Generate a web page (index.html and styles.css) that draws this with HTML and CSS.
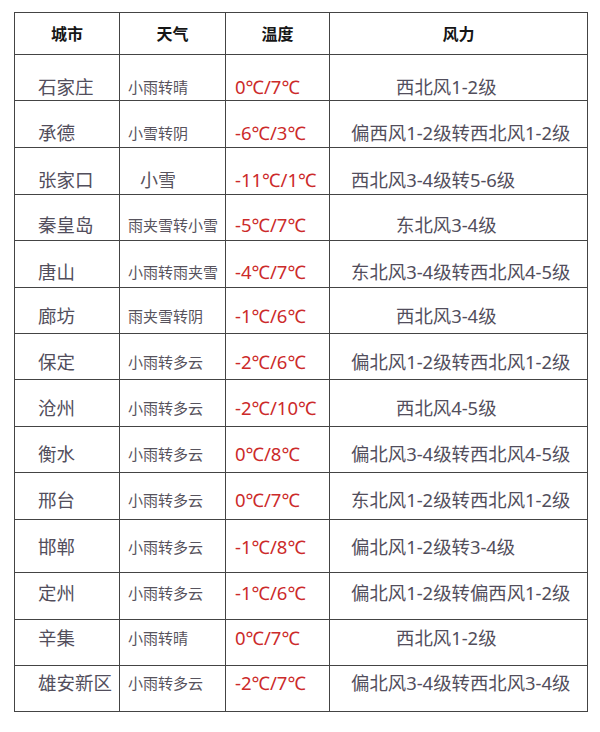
FILE: index.html
```html
<!DOCTYPE html>
<html lang="zh-CN">
<head>
<meta charset="utf-8">
<title>河北天气</title>
<link rel="stylesheet" href="styles.css">
</head>
<body>
<div class="table">
  <div class="row head">
    <div class="cell">城市</div><div class="cell">天气</div><div class="cell">温度</div><div class="cell">风力</div>
  </div>
  <div class="row"><div class="cell city">石家庄</div><div class="cell wx">小雨转晴</div><div class="cell temp">0℃/7℃</div><div class="cell wind short">西北风1-2级</div></div>
  <div class="row"><div class="cell city">承德</div><div class="cell wx">小雪转阴</div><div class="cell temp">-6℃/3℃</div><div class="cell wind">偏西风1-2级转西北风1-2级</div></div>
  <div class="row"><div class="cell city">张家口</div><div class="cell wx big">小雪</div><div class="cell temp">-11℃/1℃</div><div class="cell wind">西北风3-4级转5-6级</div></div>
  <div class="row"><div class="cell city">秦皇岛</div><div class="cell wx">雨夹雪转小雪</div><div class="cell temp">-5℃/7℃</div><div class="cell wind short">东北风3-4级</div></div>
  <div class="row"><div class="cell city">唐山</div><div class="cell wx">小雨转雨夹雪</div><div class="cell temp">-4℃/7℃</div><div class="cell wind">东北风3-4级转西北风4-5级</div></div>
  <div class="row"><div class="cell city">廊坊</div><div class="cell wx">雨夹雪转阴</div><div class="cell temp">-1℃/6℃</div><div class="cell wind short">西北风3-4级</div></div>
  <div class="row"><div class="cell city">保定</div><div class="cell wx">小雨转多云</div><div class="cell temp">-2℃/6℃</div><div class="cell wind">偏北风1-2级转西北风1-2级</div></div>
  <div class="row"><div class="cell city">沧州</div><div class="cell wx">小雨转多云</div><div class="cell temp">-2℃/10℃</div><div class="cell wind short">西北风4-5级</div></div>
  <div class="row"><div class="cell city">衡水</div><div class="cell wx">小雨转多云</div><div class="cell temp">0℃/8℃</div><div class="cell wind">偏北风3-4级转西北风4-5级</div></div>
  <div class="row"><div class="cell city">邢台</div><div class="cell wx">小雨转多云</div><div class="cell temp">0℃/7℃</div><div class="cell wind">东北风1-2级转西北风1-2级</div></div>
  <div class="row"><div class="cell city">邯郸</div><div class="cell wx">小雨转多云</div><div class="cell temp">-1℃/8℃</div><div class="cell wind">偏北风1-2级转3-4级</div></div>
  <div class="row"><div class="cell city">定州</div><div class="cell wx">小雨转多云</div><div class="cell temp">-1℃/6℃</div><div class="cell wind">偏北风1-2级转偏西风1-2级</div></div>
  <div class="row"><div class="cell city">辛集</div><div class="cell wx">小雨转晴</div><div class="cell temp">0℃/7℃</div><div class="cell wind short">西北风1-2级</div></div>
  <div class="row"><div class="cell city">雄安新区</div><div class="cell wx">小雨转多云</div><div class="cell temp">-2℃/7℃</div><div class="cell wind">偏北风3-4级转西北风3-4级</div></div>
</div>
</body>
</html>
```

FILE: styles.css
```css
html, body {
  margin: 0;
  background: #fff;
}
body {
  font-family: "Noto Sans", "Noto Sans CJK SC", sans-serif;
  color: #524e5c;
}
.table {
  margin: 12px 0 0 14px;
  width: 574px;
  box-sizing: border-box;
  border-top: 1px solid #444;
  border-left: 1px solid #444;
}
.row {
  display: grid;
  grid-template-columns: 105px 106px 104px 258px;
  box-sizing: border-box;
  height: 47px;
  border-bottom: 1px solid #444;
}
.cell {
  border-right: 1px solid #444;
  display: flex;
  align-items: flex-start;
  line-height: 24px;
  white-space: nowrap;
  overflow: hidden;
}
.head { height: 42px; }
.head .cell {
  align-items: center;
  justify-content: center;
  font-size: 16px;
  font-weight: 700;
  color: #161616;
}
.city { padding-left: 23px; font-size: 18.5px; }
.wx { padding-left: 8px; font-size: 15px; color: #57535d; }
.wx.big { padding-left: 20px; font-size: 18px; }
.temp { padding-left: 9px; font-size: 18.5px; color: #cc2a2a; }
.wind { padding-left: 21px; font-size: 18.4px; }
.wind.short { padding-left: 66px; }

.row:nth-child(2) { height: 46px; }
.row:nth-child(5), .row:nth-child(7), .row:nth-child(8),
.row:nth-child(10), .row:nth-child(14), .row:nth-child(15) { height: 46px; }
.row:nth-child(12) { height: 53px; }

.row:nth-child(2) .cell,
.row:nth-child(3) .cell,
.row:nth-child(4) .cell { padding-top: 20px; }
.row:nth-child(5) .cell { padding-top: 18px; }
.row:nth-child(6) .cell { padding-top: 19px; }
.row:nth-child(7) .cell,
.row:nth-child(8) .cell,
.row:nth-child(9) .cell { padding-top: 16px; }
.row:nth-child(10) .cell,
.row:nth-child(11) .cell,
.row:nth-child(12) .cell { padding-top: 15px; }
.row:nth-child(13) .cell { padding-top: 8px; }
.row:nth-child(14) .cell { padding-top: 6px; }
.row:nth-child(15) .cell { padding-top: 5px; }
```
